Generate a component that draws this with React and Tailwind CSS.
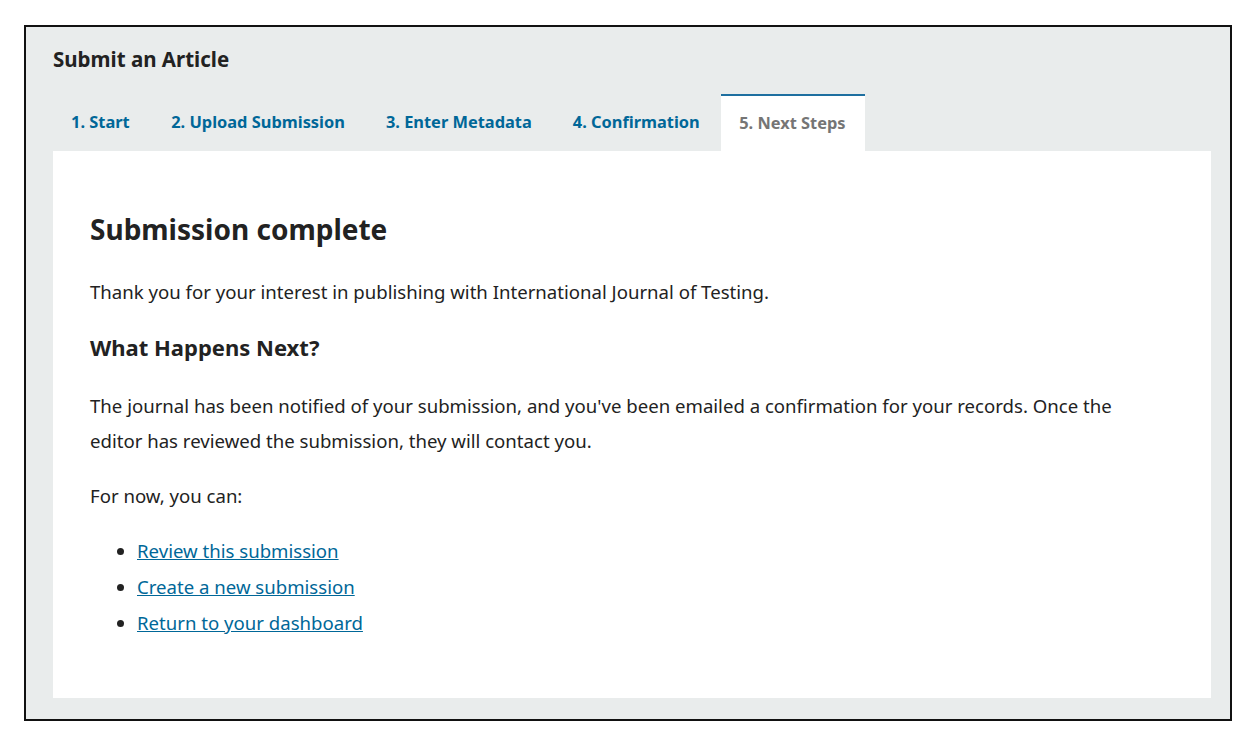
export default function App() {
  const tabs = ['1. Start', '2. Upload Submission', '3. Enter Metadata', '4. Confirmation']

  return (
    <div className="min-h-screen bg-white pt-[25px] pl-[24px] font-['Noto_Sans',sans-serif] text-[#222]">
      <div className="w-[1208px] h-[696px] border-2 border-[#111] bg-[#e9ecec] pl-[27px] pr-[19px]">
        <h1 className="pt-[19px] text-[20.5px] leading-[26px] font-bold text-[#222]">Submit an Article</h1>

        {/* Tabs */}
        <div className="mt-[22px] flex items-end h-[57px]">
          {tabs.map((t, i) => (
            <a
              key={t}
              href="#"
              className={(i === 0 ? 'pl-[18px] pr-[21px]' : 'px-[20.5px]') + ' text-[16.4px] font-bold text-[#006798] h-[57px] flex items-center'}
            >
              {t}
            </a>
          ))}
          <div className="ml-[1px] pl-[18px] pr-[19px] h-[57px] flex items-center bg-white border-t-2 border-[#1e6fa0] text-[16.4px] font-bold text-[#757575]">
            5. Next Steps
          </div>
        </div>

        {/* Panel */}
        <div className="bg-white h-[547px] pl-[37px] pt-[62px]">
          <h2 className="text-[28px] leading-[32px] font-bold text-[#222]">Submission complete</h2>
          <p className="mt-[29px] text-[18.6px] leading-[35px]">
            Thank you for your interest in publishing with International Journal of Testing.
          </p>
          <h3 className="mt-[24px] text-[22px] leading-[28px] font-bold">What Happens Next?</h3>
          <p className="mt-[27px] text-[18.6px] leading-[35px] max-w-[1060px]">
            The journal has been notified of your submission, and you've been emailed a confirmation for your records. Once the editor has reviewed the submission, they will contact you.
          </p>
          <p className="mt-[20px] text-[18.6px] leading-[35px]">For now, you can:</p>
          <ul className="mt-[20px] list-disc pl-[47px] text-[18.6px] leading-[36px]">
            <li>
              <a href="#" className="text-[#006798] underline">Review this submission</a>
            </li>
            <li>
              <a href="#" className="text-[#006798] underline">Create a new submission</a>
            </li>
            <li>
              <a href="#" className="text-[#006798] underline">Return to your dashboard</a>
            </li>
          </ul>
        </div>
      </div>
    </div>
  )
}
